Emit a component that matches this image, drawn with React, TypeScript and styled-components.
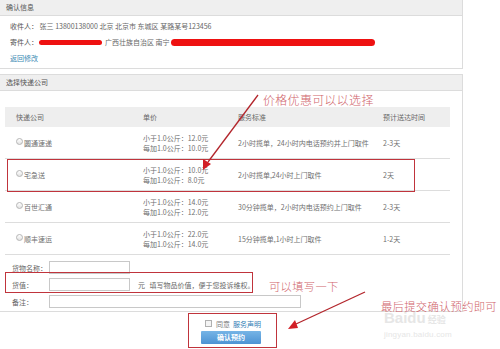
import React from "react";
import styled, { createGlobalStyle } from "styled-components";

const GlobalStyle = createGlobalStyle`
  html, body { margin: 0; padding: 0; background: #fff; }
  body {
    font-family: "Noto Sans CJK SC", "Liberation Sans", sans-serif;
    font-size: 7px;
    color: #666;
  }
`;

const Page = styled.div`
  position: relative;
  width: 500px;
  height: 349px;
  overflow: hidden;
  background: #fff;
`;

const Panel = styled.section<{ $top?: boolean }>`
  width: 462px;
  border: 1px solid #dcdcdc;
  border-left: none;
  border-top: ${(p) => (p.$top ? "none" : "1px solid #dcdcdc")};
  margin-top: ${(p) => (p.$top ? "0" : "5px")};
  background: #fff;
`;

const PanelHeader = styled.div`
  height: 15px;
  line-height: 15px;
  padding-left: 6px;
  background: #efefef;
  border-bottom: 1px solid #dcdcdc;
  color: #555;
`;

const InfoBody = styled.div`
  padding: 2px 10px;
  display: flex;
  flex-direction: column;
`;

const InfoLine = styled.div`
  height: 16px;
  line-height: 16px;
  color: #666;
  white-space: nowrap;
  display: flex;
  align-items: center;
`;

const Label = styled.span`
  color: #555;
`;

const Scribble = styled.span<{ $w: number; $h: number }>`
  display: inline-block;
  width: ${(p) => p.$w}px;
  height: ${(p) => p.$h}px;
  background: #ee1111;
  border-radius: 4px;
  margin: 0 3px 0 1px;
`;

const BackLink = styled.a`
  color: #3b8ab3;
  text-decoration: none;
`;

const Table = styled.div`
  margin: 16px 0 0 5px;
  width: 445px;
`;

const Row = styled.div<{ $head?: boolean }>`
  display: grid;
  grid-template-columns: 138px 95px 145px 67px;
  align-items: center;
  height: ${(p) => (p.$head ? "20px" : "31px")};
  background: ${(p) => (p.$head ? "#eeeeee" : "#fff")};
  border-bottom: ${(p) => (p.$head ? "none" : "1px solid #dddddd")};
  color: ${(p) => (p.$head ? "#666" : "#707070")};
`;

const FirstCell = styled.div`
  padding-left: 11px;
  display: flex;
  align-items: center;
`;

const Cell = styled.div`
  white-space: nowrap;
`;

const PriceCell = styled.div`
  display: flex;
  flex-direction: column;
  line-height: 10px;
`;

const Radio = styled.span`
  display: inline-block;
  width: 5px;
  height: 5px;
  border-radius: 50%;
  border: 1px solid #b5b5b5;
  background: linear-gradient(#fff, #e3e3e3);
  margin-right: 1px;
  margin-top: -3px;
`;

const Form = styled.div`
  padding: 4px 0 1px 12px;
  display: flex;
  flex-direction: column;
`;

const FormRow = styled.div`
  display: flex;
  align-items: center;
  height: 17px;
`;

const FormLabel = styled.span`
  width: 37px;
  color: #666;
`;

const Input = styled.span<{ $w: number }>`
  display: inline-block;
  width: ${(p) => p.$w}px;
  height: 11px;
  border: 1px solid #c8c8c8;
  background: #fff;
  box-sizing: content-box;
`;

const Hint = styled.span`
  margin-left: 8px;
  color: #666;
  word-spacing: 3px;
`;

const Footer = styled.div`
  width: 462px;
  display: flex;
  flex-direction: column;
  align-items: center;
  padding-top: 6px;
`;

const AgreeLine = styled.div`
  display: flex;
  align-items: center;
  height: 11px;
  gap: 3px;
  color: #777;
  padding-left: 4px;
`;

const CheckBox = styled.span`
  display: inline-block;
  width: 5px;
  height: 5px;
  border: 1px solid #b0b0b0;
  background: #f4f4f4;
  margin-right: 1px;
`;

const TermLink = styled.a`
  color: #2f7eb5;
  text-decoration: none;
`;

const SubmitButton = styled.button`
  margin-top: 2px;
  width: 60px;
  height: 13px;
  border: none;
  border-radius: 1px;
  background: linear-gradient(#76b4e6, #4d93d3);
  color: #fff;
  font-family: "Noto Sans CJK SC", "Liberation Sans", sans-serif;
  font-size: 7px;
  font-weight: bold;
  padding: 0;
  line-height: 13px;
`;

const HighlightBox = styled.div<{ $x: number; $y: number; $w: number; $h: number }>`
  position: absolute;
  left: ${(p) => p.$x}px;
  top: ${(p) => p.$y}px;
  width: ${(p) => p.$w}px;
  height: ${(p) => p.$h}px;
  box-sizing: border-box;
  border: 1.5px solid #c0343c;
  pointer-events: none;
`;

const Note = styled.div<{ $x: number; $y: number; $size: number }>`
  position: absolute;
  left: ${(p) => p.$x}px;
  top: ${(p) => p.$y}px;
  font-size: ${(p) => p.$size}px;
  line-height: 1;
  color: #d0646b;
  font-weight: 300;
  white-space: nowrap;
  font-family: "Noto Sans CJK SC", sans-serif;
  letter-spacing: 0.3px;
`;

const Watermark = styled.div`
  position: absolute;
  left: 384px;
  top: 310px;
  color: #e6e6e6;
  font-family: "Liberation Sans", "Noto Sans CJK SC", sans-serif;
  display: flex;
  flex-direction: column;
  align-items: flex-start;
  pointer-events: none;
`;

const WaterBrand = styled.div`
  font-size: 15px;
  font-weight: bold;
  line-height: 15px;
  display: flex;
  align-items: baseline;
  gap: 2px;
`;

const WaterSmall = styled.span`
  font-size: 9px;
  font-family: "Noto Sans CJK SC", sans-serif;
`;

const WaterUrl = styled.div`
  font-size: 8px;
  line-height: 10px;
  margin-top: 3px;
  letter-spacing: 0.2px;
`;

const ArrowLayer = styled.svg`
  position: absolute;
  left: 0;
  top: 0;
  width: 500px;
  height: 349px;
  pointer-events: none;
`;

const rows = [
  { name: "圆通速递", p1: "12.0", p2: "10.0", svc: "2小时揽单，24小时内电话预约并上门取件", time: "2-3天" },
  { name: "宅急送", p1: "10.0", p2: "8.0", svc: "2小时揽单,24小时上门取件", time: "2天" },
  { name: "百世汇通", p1: "14.0", p2: "12.0", svc: "30分钟揽单，2小时内电话预约上门取件", time: "2-3天" },
  { name: "顺丰速运", p1: "22.0", p2: "14.0", svc: "15分钟揽单,1小时上门取件", time: "1-2天" },
];

export default function App() {
  return (
    <Page>
      <GlobalStyle />
      <Panel $top>
        <PanelHeader>确认信息</PanelHeader>
        <InfoBody>
          <InfoLine>
            <Label>收件人：</Label>&nbsp;张三 13800138000 北京 北京市 东城区 某路某号123456
          </InfoLine>
          <InfoLine>
            <Label>寄件人：</Label>
            <Scribble $w={63} $h={5} />
            广西壮族自治区 南宁
            <Scribble $w={204} $h={7} />
          </InfoLine>
          <InfoLine>
            <BackLink href="#">返回修改</BackLink>
          </InfoLine>
        </InfoBody>
      </Panel>

      <Panel>
        <PanelHeader>选择快递公司</PanelHeader>
        <Table>
          <Row $head>
            <FirstCell>快递公司</FirstCell>
            <Cell>单价</Cell>
            <Cell>服务标准</Cell>
            <Cell>预计送达时间</Cell>
          </Row>
          {rows.map((r) => (
            <Row key={r.name}>
              <FirstCell>
                <Radio />
                {r.name}
              </FirstCell>
              <PriceCell>
                <span>小于1.0公斤：{r.p1}元</span>
                <span>每加1.0公斤：{r.p2}元</span>
              </PriceCell>
              <Cell>{r.svc}</Cell>
              <Cell>{r.time}</Cell>
            </Row>
          ))}
        </Table>
        <Form>
          <FormRow>
            <FormLabel>货物名称：</FormLabel>
            <Input $w={79} />
          </FormRow>
          <FormRow>
            <FormLabel>货值：</FormLabel>
            <Input $w={79} />
            <Hint>元 填写物品价值，便于您投诉维权。</Hint>
          </FormRow>
          <FormRow>
            <FormLabel>备注：</FormLabel>
            <Input $w={250} />
          </FormRow>
        </Form>
      </Panel>

      <Footer>
        <AgreeLine>
          <CheckBox />
          <span>同意</span>
          <TermLink href="#">服务声明</TermLink>
        </AgreeLine>
        <SubmitButton>确认预约</SubmitButton>
      </Footer>

      <HighlightBox $x={7} $y={159} $w={408} $h={33} />
      <HighlightBox $x={5} $y={272} $w={248} $h={21} />
      <HighlightBox $x={188} $y={313} $w={89} $h={35} />

      <Note $x={263} $y={94} $size={12}>价格优惠可以以选择</Note>
      <Note $x={269} $y={281} $size={11.3}>可以填写一下</Note>
      <Watermark>
        <WaterBrand>
          Baidu<WaterSmall>经验</WaterSmall>
        </WaterBrand>
        <WaterUrl>jingyan.baidu.com</WaterUrl>
      </Watermark>
      <Note $x={381} $y={301} $size={11.3}>最后提交确认预约即可</Note>

      <ArrowLayer viewBox="0 0 500 349">
        <line x1="258" y1="95" x2="208" y2="162" stroke="#b3262c" strokeWidth="1.3" />
        <polygon points="203,170 203,159 211,164" fill="#d21f26" />
        <line x1="365" y1="292" x2="296" y2="324" stroke="#b3262c" strokeWidth="1.3" />
        <polygon points="288,329 295,320 298,328" fill="#d21f26" />
      </ArrowLayer>
    </Page>
  );
}
